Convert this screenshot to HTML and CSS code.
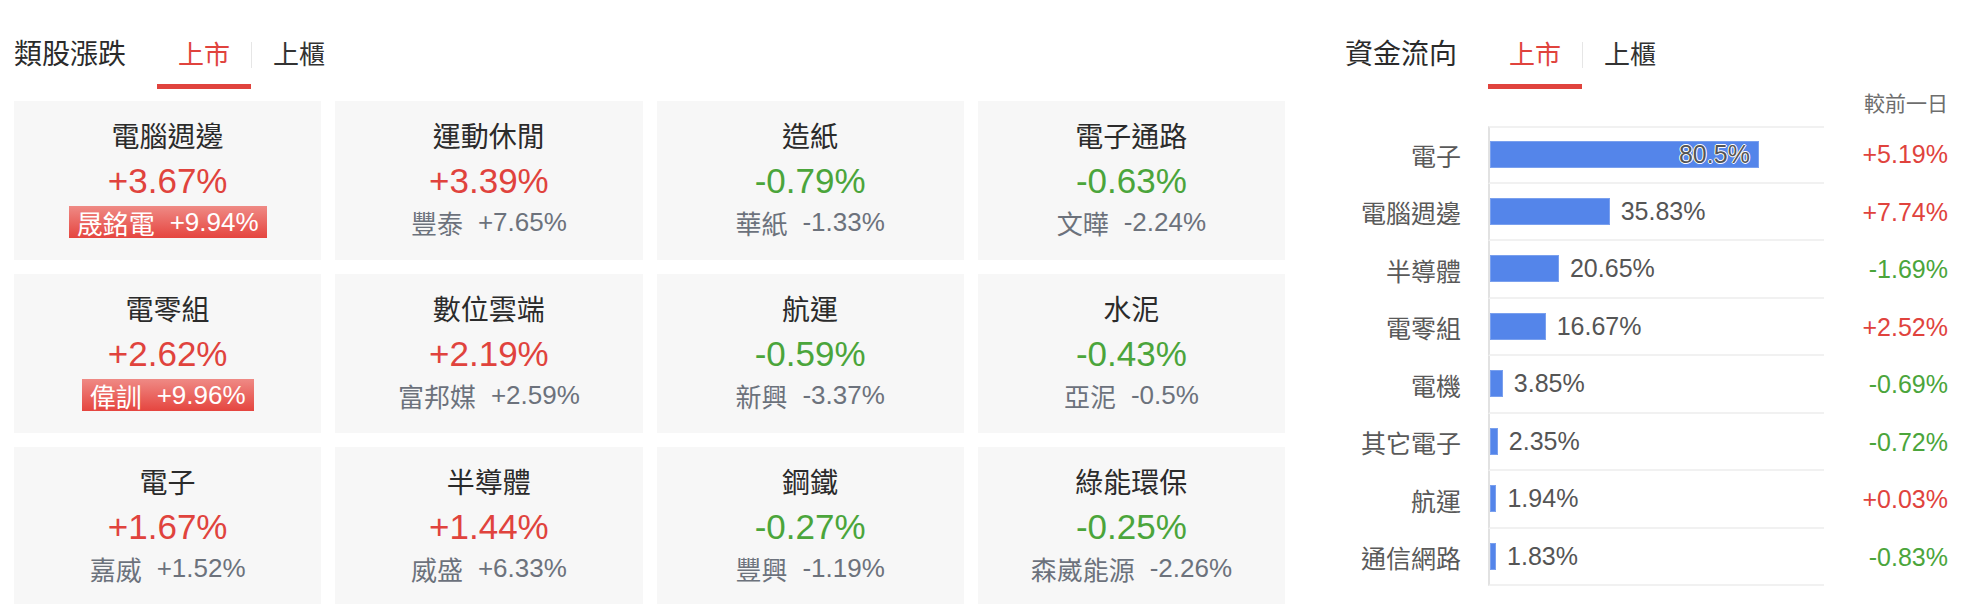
FILE: index.html
```html
<!DOCTYPE html>
<html lang="zh-Hant">

<head>
    <meta charset="utf-8">
    <link rel="stylesheet" href="styles.css">
</head>

<body>
    <div class="page">

        <section class="sectors">
            <div class="head">
                <h2 class="title">類股漲跌</h2>
                <div class="tabs">
                    <span class="tab active">上市</span>
                    <span class="sep"></span>
                    <span class="tab">上櫃</span>
                </div>
            </div>

            <div class="grid">
                <div class="card">
                    <div class="name">電腦週邊</div>
                    <div class="pct up">+3.67%</div>
                    <div class="lead"><span class="badge">晟銘電<span class="chg">+9.94%</span></span></div>
                </div>
                <div class="card">
                    <div class="name">運動休閒</div>
                    <div class="pct up">+3.39%</div>
                    <div class="lead"><span>豐泰<span class="chg">+7.65%</span></span></div>
                </div>
                <div class="card">
                    <div class="name">造紙</div>
                    <div class="pct down">-0.79%</div>
                    <div class="lead"><span>華紙<span class="chg">-1.33%</span></span></div>
                </div>
                <div class="card">
                    <div class="name">電子通路</div>
                    <div class="pct down">-0.63%</div>
                    <div class="lead"><span>文曄<span class="chg">-2.24%</span></span></div>
                </div>

                <div class="card">
                    <div class="name">電零組</div>
                    <div class="pct up">+2.62%</div>
                    <div class="lead"><span class="badge">偉訓<span class="chg">+9.96%</span></span></div>
                </div>
                <div class="card">
                    <div class="name">數位雲端</div>
                    <div class="pct up">+2.19%</div>
                    <div class="lead"><span>富邦媒<span class="chg">+2.59%</span></span></div>
                </div>
                <div class="card">
                    <div class="name">航運</div>
                    <div class="pct down">-0.59%</div>
                    <div class="lead"><span>新興<span class="chg">-3.37%</span></span></div>
                </div>
                <div class="card">
                    <div class="name">水泥</div>
                    <div class="pct down">-0.43%</div>
                    <div class="lead"><span>亞泥<span class="chg">-0.5%</span></span></div>
                </div>

                <div class="card">
                    <div class="name">電子</div>
                    <div class="pct up">+1.67%</div>
                    <div class="lead"><span>嘉威<span class="chg">+1.52%</span></span></div>
                </div>
                <div class="card">
                    <div class="name">半導體</div>
                    <div class="pct up">+1.44%</div>
                    <div class="lead"><span>威盛<span class="chg">+6.33%</span></span></div>
                </div>
                <div class="card">
                    <div class="name">鋼鐵</div>
                    <div class="pct down">-0.27%</div>
                    <div class="lead"><span>豐興<span class="chg">-1.19%</span></span></div>
                </div>
                <div class="card">
                    <div class="name">綠能環保</div>
                    <div class="pct down">-0.25%</div>
                    <div class="lead"><span>森崴能源<span class="chg">-2.26%</span></span></div>
                </div>
            </div>
        </section>

        <section class="flow">
            <div class="head">
                <h2 class="title">資金流向</h2>
                <div class="tabs">
                    <span class="tab active">上市</span>
                    <span class="sep"></span>
                    <span class="tab">上櫃</span>
                </div>
            </div>

            <div class="legend">較前一日</div>

            <div class="chart">
                <div class="row">
                    <span class="label">電子</span>
                    <div class="track"><div class="bar inside" style="width: 80.5%"><span class="val">80.5%</span></div></div>
                    <span class="diff up">+5.19%</span>
                </div>
                <div class="row">
                    <span class="label">電腦週邊</span>
                    <div class="track"><div class="bar" style="width: 35.83%"></div><span class="val">35.83%</span></div>
                    <span class="diff up">+7.74%</span>
                </div>
                <div class="row">
                    <span class="label">半導體</span>
                    <div class="track"><div class="bar" style="width: 20.65%"></div><span class="val">20.65%</span></div>
                    <span class="diff down">-1.69%</span>
                </div>
                <div class="row">
                    <span class="label">電零組</span>
                    <div class="track"><div class="bar" style="width: 16.67%"></div><span class="val">16.67%</span></div>
                    <span class="diff up">+2.52%</span>
                </div>
                <div class="row">
                    <span class="label">電機</span>
                    <div class="track"><div class="bar" style="width: 3.85%"></div><span class="val">3.85%</span></div>
                    <span class="diff down">-0.69%</span>
                </div>
                <div class="row">
                    <span class="label">其它電子</span>
                    <div class="track"><div class="bar" style="width: 2.35%"></div><span class="val">2.35%</span></div>
                    <span class="diff down">-0.72%</span>
                </div>
                <div class="row">
                    <span class="label">航運</span>
                    <div class="track"><div class="bar" style="width: 1.94%"></div><span class="val">1.94%</span></div>
                    <span class="diff up">+0.03%</span>
                </div>
                <div class="row">
                    <span class="label">通信網路</span>
                    <div class="track"><div class="bar" style="width: 1.83%"></div><span class="val">1.83%</span></div>
                    <span class="diff down">-0.83%</span>
                </div>
            </div>
        </section>

    </div>
</body>

</html>
```

FILE: styles.css
```css
body {
    margin: 0;
    background: #fff;
    font-family: "Liberation Sans", "Noto Sans CJK TC", sans-serif;
    color: #333;
}

.page {
    display: flex;
    gap: 60px;
    padding: 26px 20px 0 14px;
}

/* section header: title + market tabs */
.head {
    display: flex;
    align-items: flex-start;
    height: 63px;
}

.title {
    margin: 0;
    font-size: 28px;
    font-weight: normal;
    line-height: 58px;
    color: #2b2b2b;
}

.tabs {
    display: flex;
    align-items: flex-start;
    margin-left: 31px;
}

.tab {
    padding: 0 21px;
    font-size: 26px;
    line-height: 58px;
    color: #333;
    border-bottom: 5px solid transparent;
}

.tab.active {
    color: #e0433d;
    border-bottom-color: #e0433d;
}

.sep {
    width: 1px;
    height: 26px;
    margin-top: 16px;
    background: #e6e6e6;
}

/* sector cards */
.sectors {
    flex: none;
    width: 1271px;
}

.grid {
    display: grid;
    grid-template-columns: repeat(4, 1fr);
    grid-auto-rows: 159px;
    gap: 14px;
    margin-top: 12px;
}

.card {
    display: flex;
    flex-direction: column;
    align-items: center;
    padding-top: 17px;
    background: #f7f7f7;
}

.name {
    font-size: 28px;
    line-height: 40px;
    color: #2b2b2b;
}

.pct {
    font-size: 35px;
    line-height: 46px;
}

.up {
    color: #e0433d;
}

.down {
    color: #4ba53b;
}

.lead {
    display: flex;
    align-items: center;
    height: 36px;
    font-size: 26px;
    color: #6c727c;
}

.lead > span {
    display: inline-flex;
    align-items: center;
    height: 32px;
    padding: 0 8px;
}

.chg {
    margin-left: 15px;
}

.badge {
    color: #fff;
    background: linear-gradient(#ef8a85, #e5453f);
}

/* fund flow chart */
.flow {
    flex: 1;
}

.legend {
    margin: 3px 0 10px;
    font-size: 21px;
    line-height: 24px;
    text-align: right;
    color: #6e6e6e;
}

.row {
    display: flex;
    align-items: center;
    height: 57.5px;
}

.label {
    width: 116px;
    margin-right: 27px;
    font-size: 25px;
    text-align: right;
    color: #5a5a5a;
}

.track {
    box-sizing: border-box;
    display: flex;
    align-items: center;
    width: 336px;
    height: 100%;
    border-left: 2px solid #e2e2e2;
    border-bottom: 2px solid #f1f1f1;
}

.row:first-child .track {
    border-top: 2px solid #f1f1f1;
}

.bar {
    box-sizing: border-box;
    display: flex;
    align-items: center;
    justify-content: flex-end;
    height: 27px;
    background: #5485ea;
    border: 1px solid #7aa0ee;
}

.val {
    margin-left: 11px;
    font-size: 25px;
    color: #555;
}

.bar.inside .val {
    margin: 0 8px 0 0;
    text-shadow: 1px 0 0 #fff, -1px 0 0 #fff, 0 1px 0 #fff, 0 -1px 0 #fff;
}

.diff {
    flex: 1;
    font-size: 25px;
    text-align: right;
}
```
